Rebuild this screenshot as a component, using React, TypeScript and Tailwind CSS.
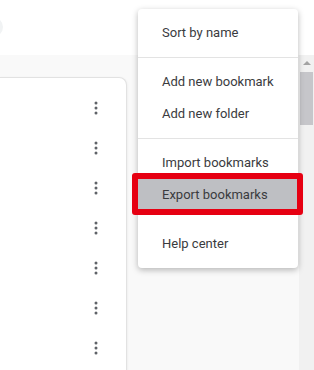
import React from 'react'

const Kebab: React.FC = () => (
  <svg width="4" height="14" viewBox="0 0 4 14" className="block">
    <circle cx="2" cy="2" r="1.5" fill="#5f6368" />
    <circle cx="2" cy="7" r="1.5" fill="#5f6368" />
    <circle cx="2" cy="12" r="1.5" fill="#5f6368" />
  </svg>
)

const Divider: React.FC<{ hidden?: boolean }> = ({ hidden }) => (
  <div className={`my-2 h-px ${hidden ? 'bg-transparent' : 'bg-[#e3e3e3]'}`} />
)

const MenuItem: React.FC<{ label: string; active?: boolean }> = ({ label, active }) => (
  <div className={`relative flex h-8 items-center pl-6 ${active ? 'bg-[#bebfc3]' : ''}`}>
    {active && (
      <div className="absolute -left-[6px] -right-[5px] -top-[6px] -bottom-[4px] rounded-[3px] border-[6px] border-[#e60012]" />
    )}
    <span className="relative text-[13px] text-[#3a3b3e]">{label}</span>
  </div>
)

export default function App() {
  const rows = Array.from({ length: 8 }, (_, i) => i)

  return (
    <div className="relative flex h-[370px] w-[314px] flex-col overflow-hidden bg-white font-['Roboto',sans-serif]">
      {/* toolbar */}
      <div className="relative h-[55px] shrink-0 bg-white">
        <div className="absolute -left-[20px] top-[17px] h-[20px] w-[23px] rounded-full bg-[#f1f3f4]" />
      </div>

      {/* content */}
      <div className="flex min-h-0 flex-1 bg-[#f9f9f9]">
        <div className="flex-1 pt-[22px]">
          <div className="h-[400px] w-[127px] rounded-tr-[8px] border border-l-0 border-[#e2e2e2] bg-white pt-[10px] shadow-[0_1px_3px_rgba(0,0,0,0.08)]">
            {rows.map(i => (
              <div key={i} className="flex h-10 items-center pl-[94px]">
                <Kebab />
              </div>
            ))}
          </div>
        </div>

        {/* scrollbar */}
        <div className="flex w-[15px] shrink-0 flex-col items-center bg-[#f1f1f1]">
          <div className="mt-[6px] h-0 w-0 border-x-[4px] border-b-[4px] border-x-transparent border-b-[#a3a3a3]" />
          <div className="mt-[7px] h-[53px] w-[13px] bg-[#c6c6ca]" />
        </div>
      </div>

      {/* context menu */}
      <div className="absolute left-[138px] top-[9px] w-[160px] rounded-[4px] bg-white py-2 shadow-[0_2px_6px_rgba(0,0,0,0.28)]">
        <MenuItem label="Sort by name" />
        <Divider />
        <MenuItem label="Add new bookmark" />
        <MenuItem label="Add new folder" />
        <Divider />
        <MenuItem label="Import bookmarks" />
        <MenuItem label="Export bookmarks" active />
        <Divider hidden />
        <MenuItem label="Help center" />
      </div>
    </div>
  )
}
